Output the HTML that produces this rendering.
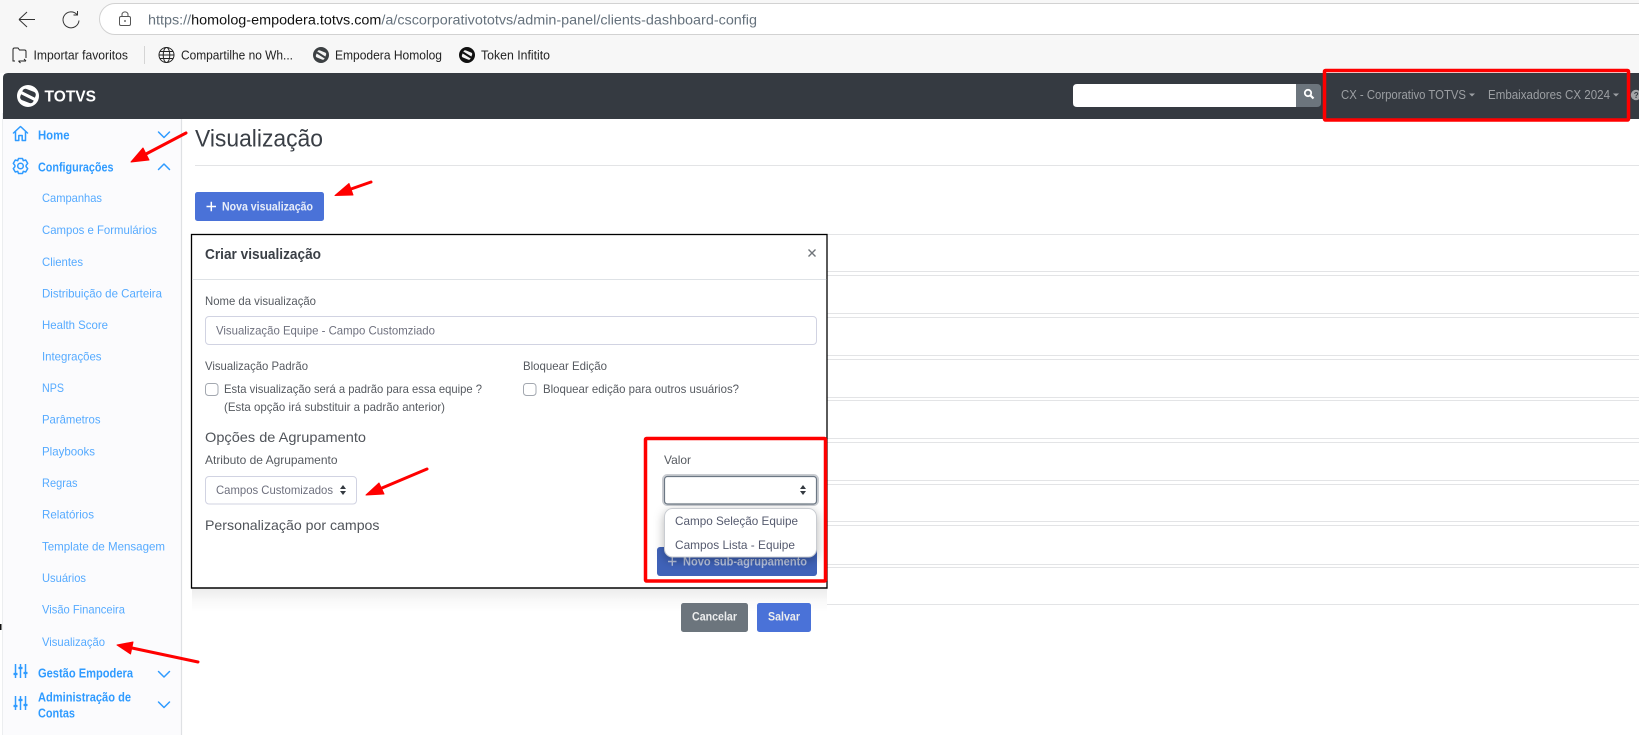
<!DOCTYPE html>
<html lang="pt-BR">
<head>
<meta charset="utf-8">
<title>Visualização</title>
<style>
html,body{margin:0;padding:0;background:#fff;width:1639px;height:737px;overflow:hidden}
svg{display:block}
text{font-family:"Liberation Sans",sans-serif}
.b{font-size:12.5px;fill:#222}
.s{font-size:12px;fill:#55aaff}
.h{font-size:12.5px;fill:#2f9bff;font-weight:700}
.m{font-size:12px;fill:#565a60}
.n{fill:none;stroke:#2f9bff;stroke-width:1.5;stroke-linecap:round;stroke-linejoin:round}
.l{stroke:#e3e4e6;stroke-width:1}
</style>
</head>
<body>
<svg xmlns="http://www.w3.org/2000/svg" width="1639" height="737" viewBox="0 0 1639 737">
<defs>
<filter id="sd" x="-20%" y="-30%" width="140%" height="170%"><feDropShadow dx="0" dy="3" stdDeviation="5" flood-color="#000" flood-opacity=".3"/></filter>
<linearGradient id="fade" x1="0" y1="0" x2="0" y2="1"><stop offset="0" stop-color="#ebebeb"/><stop offset=".5" stop-color="#f8f8f8"/><stop offset="1" stop-color="#fff"/></linearGradient>
<g id="logo"><circle r="8" fill="currentColor"/><rect x="-4.600" y="-3.800" width="9.200" height="7.600" rx="1.800" fill="#f4f4f4" transform="rotate(22)"/><path d="M-4 -2.500L4 2.500" stroke="currentColor" stroke-width="2"/></g>
<g id="sl"><path d="M-5 -7V7M0 -7V7M5 -7V7" stroke="#2f9bff" stroke-width="1.500"/><path d="M-7 3H-3M-2 -3H2M3 2H7" stroke="#2f9bff" stroke-width="2.200"/></g>
<path id="ud" d="M-3 -1L0 -5L3 -1ZM-3 1L0 5L3 1Z" fill="#343a40"/>
</defs>

<!-- browser chrome -->
<rect width="1639" height="73" fill="#f7f7f7"/>
<path d="M19 19.500H35M19 19.500L27 12M19 19.500L27 27" fill="none" stroke="#333" stroke-width="1"/>
<path d="M77 14.500A8 8 0 1 0 79 20.500M77.500 11V15H73.500" fill="none" stroke="#333" stroke-width="1"/>
<rect x="99.500" y="3.500" width="1560" height="31" rx="15.500" fill="#fff" stroke="#d2d2d2"/>
<rect x="119.500" y="16.500" width="11" height="9" rx="1.500" fill="none" stroke="#555" stroke-width="1"/>
<path d="M122 16.500V14.500A3 2.600 0 0 1 128 14.500V16.500" fill="none" stroke="#555" stroke-width="1"/><circle cx="125" cy="21" r=".9" fill="#444"/>
<text x="148" y="24.500" font-size="13.500" textLength="609" lengthAdjust="spacingAndGlyphs" fill="#66727d">https://<tspan fill="#111">homolog-empodera.totvs.com</tspan>/a/cscorporativototvs/admin-panel/clients-dashboard-config</text>

<path d="M15 61H13V49.500Q13 48 14.500 48H18L19.500 50H24.500Q26 50 26 51.500V58M18.500 61H26M26 61L24 59M18.500 61L20.500 63" fill="none" stroke="#222" stroke-width="1"/>
<text x="33.500" y="59.500" class="b" textLength="94.500" lengthAdjust="spacingAndGlyphs">Importar favoritos</text>
<path d="M144.500 46V64" stroke="#d5d5d5"/>
<g fill="none" stroke="#222" stroke-width="1"><circle cx="166.500" cy="55" r="7.500"/><ellipse cx="166.500" cy="55" rx="3.300" ry="7.500"/><path d="M159 55H174M160 51.500H173M160 58.500H173"/></g>
<text x="181" y="59.500" class="b" textLength="112" lengthAdjust="spacingAndGlyphs">Compartilhe no Wh...</text>
<use href="#logo" x="321" y="55" color="#3c4043"/>
<text x="335" y="59.500" class="b" textLength="107" lengthAdjust="spacingAndGlyphs">Empodera Homolog</text>
<use href="#logo" x="467" y="55" color="#111"/>
<text x="481" y="59.500" class="b" textLength="69" lengthAdjust="spacingAndGlyphs">Token Infitito</text>

<!-- sidebar -->
<rect x="3" y="113" width="178.500" height="622" fill="#fbfbfd"/>
<path d="M181.500 113V735" stroke="#dfe1e4" stroke-width="1.200"/>
<path d="M2.500 113V735" stroke="#eceef0" stroke-width="1"/>
<rect x="0" y="624" width="1.500" height="6" fill="#111"/>

<!-- navbar -->
<path d="M3 119V78Q3 73 8 73H1639V119Z" fill="#353a41"/>
<circle cx="28" cy="96" r="11" fill="#fff"/>
<rect x="21" y="90" width="14" height="12" rx="3" fill="#353a41" transform="rotate(22 28 96)"/>
<path d="M21 92.500L35 99.500" stroke="#fff" stroke-width="3.200"/>
<text x="44.500" y="101.500" font-size="15.500" font-weight="700" fill="#fff" textLength="51.500" lengthAdjust="spacingAndGlyphs">TOTVS</text>
<path d="M1077 84H1296V107H1077Q1073 107 1073 103V88Q1073 84 1077 84Z" fill="#fff"/>
<path d="M1296 84H1317Q1321 84 1321 88V103Q1321 107 1317 107H1296Z" fill="#6c757d"/>
<circle cx="1308" cy="93" r="3.200" fill="none" stroke="#fff" stroke-width="1.800"/><path d="M1310.500 95.500L1313.500 98.500" stroke="#fff" stroke-width="2.200"/>
<rect x="1324.500" y="70.500" width="304" height="49.500" rx="1" fill="none" stroke="#f00" stroke-width="3.500"/>
<text x="1341" y="99" font-size="12.500" fill="#9c9fa3" textLength="125" lengthAdjust="spacingAndGlyphs">CX - Corporativo TOTVS</text>
<path d="M1469 93.500H1475L1472 96.500Z" fill="#9c9fa3"/>
<text x="1488" y="99" font-size="12.500" fill="#9c9fa3" textLength="122" lengthAdjust="spacingAndGlyphs">Embaixadores CX 2024</text>
<path d="M1613 93.500H1619L1616 96.500Z" fill="#9c9fa3"/>
<circle cx="1636" cy="95" r="5.200" fill="#a3a5a8"/><text x="1633.700" y="98" font-size="8" font-weight="700" fill="#353a41">?</text>

<!-- sidebar content -->
<path class="n" d="M13.500 133L20.500 126.500L27.500 133M15.500 131.500V140.500H18.800V135.500H22.200V140.500H25.500V131.500"/>
<text x="38" y="139.500" class="h" textLength="31.500" lengthAdjust="spacingAndGlyphs">Home</text>
<path class="n" d="M158.500 132L164 137.500L169.500 132"/>
<circle cx="20.500" cy="166" r="2.800" class="n"/>
<path class="n" d="M18.500 158.500H22.500L23.300 160.700L25.700 160L27.700 163.400L26.100 165.300V166.700L27.700 168.600L25.700 172L23.300 171.300L22.500 173.500H18.500L17.700 171.300L15.300 172L13.300 168.600L14.900 166.700V165.300L13.300 163.400L15.300 160L17.700 160.700Z"/>
<text x="38" y="171.500" class="h" textLength="75.500" lengthAdjust="spacingAndGlyphs">Configurações</text>
<path class="n" d="M158.500 169.500L164 164L169.500 169.500"/>

<text x="42" y="202" class="s" textLength="60" lengthAdjust="spacingAndGlyphs">Campanhas</text>
<text x="42" y="234" class="s" textLength="115" lengthAdjust="spacingAndGlyphs">Campos e Formulários</text>
<text x="42" y="266" class="s" textLength="41" lengthAdjust="spacingAndGlyphs">Clientes</text>
<text x="42" y="297.500" class="s" textLength="120" lengthAdjust="spacingAndGlyphs">Distribuição de Carteira</text>
<text x="42" y="329" class="s" textLength="66" lengthAdjust="spacingAndGlyphs">Health Score</text>
<text x="42" y="360.500" class="s" textLength="59.500" lengthAdjust="spacingAndGlyphs">Integrações</text>
<text x="42" y="392" class="s" textLength="22" lengthAdjust="spacingAndGlyphs">NPS</text>
<text x="42" y="423.500" class="s" textLength="58.500" lengthAdjust="spacingAndGlyphs">Parâmetros</text>
<text x="42" y="455.500" class="s" textLength="53" lengthAdjust="spacingAndGlyphs">Playbooks</text>
<text x="42" y="487" class="s" textLength="35.500" lengthAdjust="spacingAndGlyphs">Regras</text>
<text x="42" y="518.500" class="s" textLength="52" lengthAdjust="spacingAndGlyphs">Relatórios</text>
<text x="42" y="550.500" class="s" textLength="123" lengthAdjust="spacingAndGlyphs">Template de Mensagem</text>
<text x="42" y="582" class="s" textLength="44" lengthAdjust="spacingAndGlyphs">Usuários</text>
<text x="42" y="613.500" class="s" textLength="83" lengthAdjust="spacingAndGlyphs">Visão Financeira</text>
<text x="42" y="646" class="s" textLength="63" lengthAdjust="spacingAndGlyphs">Visualização</text>

<use href="#sl" x="20.500" y="671"/>
<text x="38" y="677.500" class="h" textLength="95" lengthAdjust="spacingAndGlyphs">Gestão Empodera</text>
<path class="n" d="M158.500 671.500L164 677L169.500 671.500"/>
<use href="#sl" x="20.500" y="703"/>
<text x="38" y="701.500" class="h" textLength="93" lengthAdjust="spacingAndGlyphs">Administração de</text>
<text x="38" y="717.500" class="h" textLength="37" lengthAdjust="spacingAndGlyphs">Contas</text>
<path class="n" d="M158.500 702L164 707.500L169.500 702"/>

<!-- page content -->
<text x="195" y="146.500" font-size="24" fill="#3a3f46" textLength="128" lengthAdjust="spacingAndGlyphs">Visualização</text>
<path d="M195 165.500H1639" class="l"/>
<rect x="195" y="192" width="129" height="29" rx="2.500" fill="#4a72d8"/>
<path d="M206.500 206.500H216M211.300 201.700V211.300" stroke="#fff" stroke-width="1.500"/>
<text x="222" y="210.500" font-size="12" font-weight="700" fill="#e8edf9" textLength="91" lengthAdjust="spacingAndGlyphs">Nova visualização</text>

<path class="l" d="M827 234.500H1639M827 271.500H1639M827 275.500H1639M827 313.500H1639M827 317.500H1639M827 355.500H1639M827 359.500H1639M827 397.500H1639M827 400.500H1639M827 438.500H1639M827 442.500H1639M827 480.500H1639M827 484.500H1639M827 521.500H1639M827 525.500H1639M827 564.500H1639M827 567.500H1639M827 604.500H1639"/>

<!-- modal -->
<rect x="192" y="588" width="635" height="24" fill="url(#fade)"/>
<rect x="191.500" y="234.500" width="635.500" height="353.500" fill="#fff" stroke="#000" stroke-width="1.300"/>
<text x="205" y="259" font-size="14.500" font-weight="700" fill="#3a3f46" textLength="116" lengthAdjust="spacingAndGlyphs">Criar visualização</text>
<path d="M808.500 249.500L815.500 256.500M815.500 249.500L808.500 256.500" stroke="#70757a" stroke-width="1.400"/>
<path d="M192 279.500H826.500" stroke="#dee2e6"/>
<text x="205" y="305" class="m" textLength="111" lengthAdjust="spacingAndGlyphs">Nome da visualização</text>
<rect x="205.500" y="316.500" width="611" height="28" rx="3.500" fill="#fff" stroke="#d1d3e2"/>
<text x="216" y="334.500" class="m" textLength="219" lengthAdjust="spacingAndGlyphs" style="fill:#6e707e">Visualização Equipe - Campo Customziado</text>
<text x="205" y="370" class="m" textLength="103" lengthAdjust="spacingAndGlyphs">Visualização Padrão</text>
<text x="523" y="370" class="m" textLength="84" lengthAdjust="spacingAndGlyphs">Bloquear Edição</text>
<rect x="205.500" y="383.500" width="12.500" height="12" rx="3" fill="#fff" stroke="#a3a8b0"/>
<text x="224" y="393" class="m" textLength="258" lengthAdjust="spacingAndGlyphs">Esta visualização será a padrão para essa equipe ?</text>
<text x="224" y="411" class="m" textLength="221" lengthAdjust="spacingAndGlyphs">(Esta opção irá substituir a padrão anterior)</text>
<rect x="523.500" y="383.500" width="12.500" height="12" rx="3" fill="#fff" stroke="#a3a8b0"/>
<text x="543" y="393" class="m" textLength="196" lengthAdjust="spacingAndGlyphs">Bloquear edição para outros usuários?</text>
<text x="205" y="442" font-size="14" fill="#50545a" textLength="161" lengthAdjust="spacingAndGlyphs">Opções de Agrupamento</text>
<text x="205" y="464" class="m" textLength="132.500" lengthAdjust="spacingAndGlyphs">Atributo de Agrupamento</text>
<rect x="205.500" y="476.500" width="151" height="27.500" rx="3.500" fill="#fff" stroke="#d1d3e2"/>
<text x="216" y="494" class="m" textLength="117" lengthAdjust="spacingAndGlyphs" style="fill:#6e707e">Campos Customizados</text>
<use href="#ud" x="343" y="490"/>
<text x="205" y="530" font-size="14" fill="#50545a" textLength="174.500" lengthAdjust="spacingAndGlyphs">Personalização por campos</text>

<text x="664" y="464" class="m" textLength="27" lengthAdjust="spacingAndGlyphs">Valor</text>
<rect x="664" y="476" width="153" height="28" rx="3.500" fill="#fff" stroke="#c9ccd1" stroke-width="4"/>
<rect x="664.500" y="476.500" width="152" height="27.500" rx="3" fill="#fff" stroke="#6c7784" stroke-width="1.200"/>
<use href="#ud" x="803" y="490"/>
<rect x="657" y="547" width="160" height="29" rx="3" fill="#3f62b8"/>
<path d="M668 561.500H676.500M672.300 557.200V565.800" stroke="#b9c4de" stroke-width="1.400"/>
<text x="683" y="565.500" font-size="12" font-weight="700" fill="#b9c4de" textLength="124" lengthAdjust="spacingAndGlyphs">Novo sub-agrupamento</text>
<rect x="664.500" y="508.500" width="152" height="48.500" rx="8" fill="#fff" stroke="#c9ccd1" filter="url(#sd)"/>
<text x="675" y="525" class="m" textLength="123" lengthAdjust="spacingAndGlyphs" style="fill:#555a6e">Campo Seleção Equipe</text>
<text x="675" y="549" class="m" textLength="120" lengthAdjust="spacingAndGlyphs" style="fill:#555a6e">Campos Lista - Equipe</text>
<rect x="645.500" y="438.500" width="180" height="142.500" rx="1" fill="none" stroke="#f00" stroke-width="3.500"/>
<path d="M191.500 588H827.500" stroke="#000" stroke-width="1.300"/>

<rect x="681" y="603" width="67" height="29" rx="2.500" fill="#6c757d"/>
<text x="692" y="620.500" font-size="12" font-weight="700" fill="#eceded" textLength="45" lengthAdjust="spacingAndGlyphs">Cancelar</text>
<rect x="757" y="603" width="54" height="29" rx="2.500" fill="#4a72d8"/>
<text x="768" y="620.500" font-size="12" font-weight="700" fill="#eceded" textLength="32" lengthAdjust="spacingAndGlyphs">Salvar</text>

<!-- red annotation arrows -->
<g stroke="#f00" stroke-width="3" stroke-linecap="round" fill="#f00">
<path d="M186 133L146 154"/><path stroke-width="1" stroke-linejoin="round" d="M131 162L149 160L143 148Z"/>
<path d="M371 182L351 189"/><path stroke-width="1" stroke-linejoin="round" d="M335 195.500L353 195L349 183.500Z"/>
<path d="M198 662L132 648"/><path stroke-width="1" stroke-linejoin="round" d="M117 645L133 642L130.500 654Z"/>
<path d="M427 469L382 488"/><path stroke-width="1" stroke-linejoin="round" d="M366 495L384 494L379 483Z"/>
</g>
</svg>
</body>
</html>
